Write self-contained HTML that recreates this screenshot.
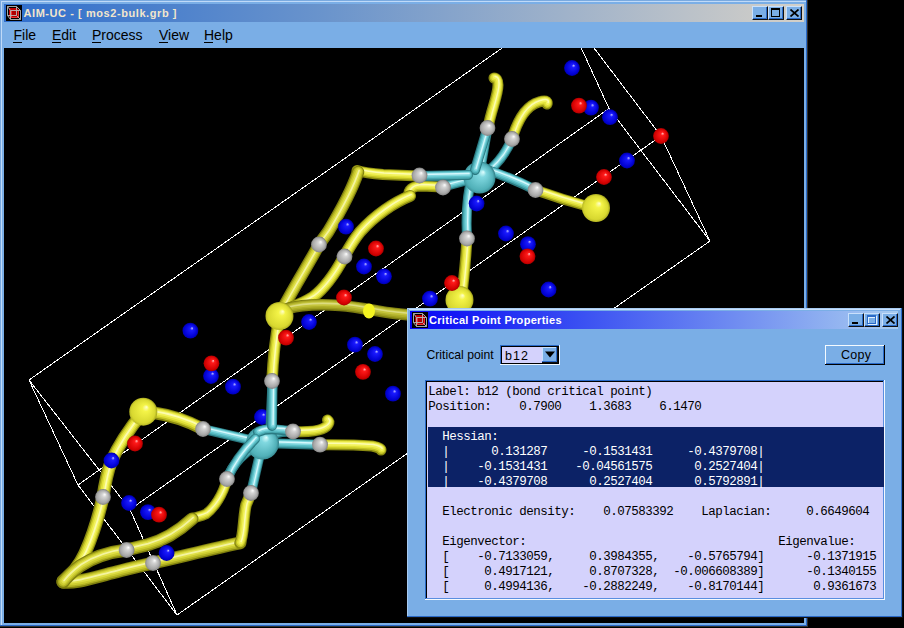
<!DOCTYPE html>
<html><head><meta charset="utf-8">
<style>
*{margin:0;padding:0;box-sizing:border-box}
html,body{width:904px;height:628px;overflow:hidden;background:#000}
body{position:relative;font-family:"Liberation Sans",sans-serif}
.a{position:absolute}
.tx{position:absolute;white-space:pre;line-height:1}
.tb{position:absolute;width:16px;height:14px;background:#7aaee6;border-top:1px solid #c8e0fc;border-left:1px solid #c8e0fc;border-right:1px solid #101010;border-bottom:1px solid #101010;box-shadow:inset -1px -1px 0 #2a6ac8}
pre{position:absolute;font-family:"Liberation Mono",monospace;font-size:12.5px;letter-spacing:-0.5px;line-height:15px;color:#000;white-space:pre}
</style></head><body>
<!-- main window -->
<div class="a" style="left:0;top:0;width:808px;height:627px;background:#303030"></div>
<div class="a" style="left:0;top:0;width:807px;height:626px;background:#2a6ac8"></div>
<div class="a" style="left:0;top:0;width:806px;height:625px;background:#7aaae0"></div>
<div class="a" style="left:1px;top:1px;width:805px;height:624px;background:#c0daf8"></div>
<div class="a" style="left:2px;top:2px;width:804px;height:623px;background:#7aaee6"></div>
<div class="a" style="left:4px;top:4px;width:800px;height:18px;background:linear-gradient(to right,#2f6ecc 0%,#6a94cc 40%,#d4d0c8 100%)"></div>
<svg class="a" style="left:6px;top:5px" width="16" height="16" viewBox="0 0 16 16">
 <rect width="16" height="16" fill="#000"/>
 <path d="M3,3 H11 L13,5 V13 H5 L3,11 Z" fill="#c00000"/>
 <path d="M5,5 H13 V13 H5 Z" fill="#b00000"/>
 <path d="M5.5,5.5 H12.5 V12.5 H5.5 Z" stroke="#ff4040" stroke-width="0.8" fill="none"/>
 <path d="M1.5,1.5 H10.5 V10.5 H1.5 Z M4.5,5.5 H14.5 V14.5 H4.5 Z M1.5,1.5 L4.5,5.5 M10.5,1.5 L14.5,5.5 M10.5,10.5 L14.5,14.5 M1.5,10.5 L4.5,14.5" stroke="#b8b8b8" stroke-width="0.9" fill="none"/>
</svg>
<div class="tx" style="left:23.5px;top:8px;font-size:11px;font-weight:bold;letter-spacing:0.57px;color:#f2e6cc">AIM-UC - [ mos2-bulk.grb ]</div>
<div class="tb" style="left:752px;top:6px"></div>
<div class="tb" style="left:768px;top:6px"></div>
<div class="tb" style="left:786px;top:6px"></div>
<div class="a" style="left:756px;top:15px;width:6px;height:2px;background:#000"></div>
<div class="a" style="left:771px;top:8px;width:9px;height:9px;border:1px solid #000;border-top-width:2px"></div>
<svg class="a" style="left:790px;top:9px" width="9" height="8" viewBox="0 0 9 8"><path d="M0.5,0.5 L8.5,7.5 M8.5,0.5 L0.5,7.5" stroke="#000" stroke-width="1.7"/></svg>
<div class="tx" style="left:13.5px;top:28px;font-size:14px">File</div>
<div class="tx" style="left:52px;top:28px;font-size:14px">Edit</div>
<div class="tx" style="left:92px;top:28px;font-size:14px">Process</div>
<div class="tx" style="left:159px;top:28px;font-size:14px">View</div>
<div class="tx" style="left:204px;top:28px;font-size:14px">Help</div>
<div class="a" style="left:13px;top:42px;width:9px;height:1px;background:#000"></div>
<div class="a" style="left:52px;top:42px;width:9px;height:1px;background:#000"></div>
<div class="a" style="left:92px;top:42px;width:9px;height:1px;background:#000"></div>
<div class="a" style="left:159px;top:42px;width:9px;height:1px;background:#000"></div>
<div class="a" style="left:204px;top:42px;width:9px;height:1px;background:#000"></div>
<!-- canvas -->
<div class="a" style="left:4px;top:48px;width:800px;height:575px;background:#000;overflow:hidden">
<svg width="800" height="575" viewBox="0 0 800 575" style="position:absolute;left:0;top:0">
<defs>
<radialGradient id="gB" cx="0.45" cy="0.55" r="0.6" fx="0.62" fy="0.33"><stop offset="0" stop-color="#c8c8ff"/><stop offset="0.18" stop-color="#1a1aff"/><stop offset="0.7" stop-color="#0000d0"/><stop offset="1" stop-color="#000070"/></radialGradient>
<radialGradient id="gR" cx="0.45" cy="0.55" r="0.6" fx="0.62" fy="0.33"><stop offset="0" stop-color="#ffc8c8"/><stop offset="0.18" stop-color="#ff1a1a"/><stop offset="0.7" stop-color="#d00000"/><stop offset="1" stop-color="#700000"/></radialGradient>
<radialGradient id="gG" cx="0.45" cy="0.55" r="0.6" fx="0.62" fy="0.33"><stop offset="0" stop-color="#ffffff"/><stop offset="0.22" stop-color="#d4d4d4"/><stop offset="0.65" stop-color="#a8a8a8"/><stop offset="1" stop-color="#5c5c5c"/></radialGradient>
<radialGradient id="gY" cx="0.45" cy="0.55" r="0.6" fx="0.62" fy="0.33"><stop offset="0" stop-color="#ffffd0"/><stop offset="0.2" stop-color="#f4f448"/><stop offset="0.7" stop-color="#d8d830"/><stop offset="1" stop-color="#808010"/></radialGradient>
<radialGradient id="gC" cx="0.45" cy="0.55" r="0.6" fx="0.62" fy="0.33"><stop offset="0" stop-color="#e0ffff"/><stop offset="0.2" stop-color="#80d8e0"/><stop offset="0.7" stop-color="#50b0b8"/><stop offset="1" stop-color="#206068"/></radialGradient>
</defs>
<path d="M25.0,332.0L74.0,437.0M74.0,437.0L173.0,567.0M173.0,567.0L126.0,461.5M126.0,461.5L25.0,332.0M25.0,332.0L558.0,-42.0M74.0,437.0L605.0,60.5M173.0,567.0L706.0,193.0M126.0,461.5L657.0,88.0M706.0,193.0L657.0,88.0M706.0,193.0L605.0,60.5M657.0,88.0L558.0,-42.0M605.0,60.5L558.0,-42.0" stroke="#ffffff" stroke-width="1" fill="none" shape-rendering="crispEdges"/>
<path d="M 484.0 80.0 C 487.0 62.0 494.0 48.0 494.0 37.0 C 494.0 32.0 492.0 30.0 490.0 30.0" stroke="#8a8a10" stroke-width="11.0" fill="none" stroke-linecap="round" stroke-linejoin="round"/>
<path d="M 484.0 80.0 C 487.0 62.0 494.0 48.0 494.0 37.0 C 494.0 32.0 492.0 30.0 490.0 30.0" stroke="#c2c224" stroke-width="8.8" fill="none" stroke-linecap="round" stroke-linejoin="round" transform="translate(0.27,-0.36)"/>
<path d="M 484.0 80.0 C 487.0 62.0 494.0 48.0 494.0 37.0 C 494.0 32.0 492.0 30.0 490.0 30.0" stroke="#e2e23a" stroke-width="6.6" fill="none" stroke-linecap="round" stroke-linejoin="round" transform="translate(0.54,-0.72)"/>
<path d="M 484.0 80.0 C 487.0 62.0 494.0 48.0 494.0 37.0 C 494.0 32.0 492.0 30.0 490.0 30.0" stroke="#f2f25c" stroke-width="4.2" fill="none" stroke-linecap="round" stroke-linejoin="round" transform="translate(0.81,-1.08)"/>
<path d="M 484.0 80.0 C 487.0 62.0 494.0 48.0 494.0 37.0 C 494.0 32.0 492.0 30.0 490.0 30.0" stroke="#fcfcb0" stroke-width="1.5" fill="none" stroke-linecap="round" stroke-linejoin="round" transform="translate(1.08,-1.44)"/>
<path d="M 508.0 91.0 C 513.0 74.0 521.0 58.0 535.0 54.0 C 541.0 52.0 544.0 53.0 543.0 56.0" stroke="#8a8a10" stroke-width="11.0" fill="none" stroke-linecap="round" stroke-linejoin="round"/>
<path d="M 508.0 91.0 C 513.0 74.0 521.0 58.0 535.0 54.0 C 541.0 52.0 544.0 53.0 543.0 56.0" stroke="#c2c224" stroke-width="8.8" fill="none" stroke-linecap="round" stroke-linejoin="round" transform="translate(0.27,-0.36)"/>
<path d="M 508.0 91.0 C 513.0 74.0 521.0 58.0 535.0 54.0 C 541.0 52.0 544.0 53.0 543.0 56.0" stroke="#e2e23a" stroke-width="6.6" fill="none" stroke-linecap="round" stroke-linejoin="round" transform="translate(0.54,-0.72)"/>
<path d="M 508.0 91.0 C 513.0 74.0 521.0 58.0 535.0 54.0 C 541.0 52.0 544.0 53.0 543.0 56.0" stroke="#f2f25c" stroke-width="4.2" fill="none" stroke-linecap="round" stroke-linejoin="round" transform="translate(0.81,-1.08)"/>
<path d="M 508.0 91.0 C 513.0 74.0 521.0 58.0 535.0 54.0 C 541.0 52.0 544.0 53.0 543.0 56.0" stroke="#fcfcb0" stroke-width="1.5" fill="none" stroke-linecap="round" stroke-linejoin="round" transform="translate(1.08,-1.44)"/>
<path d="M 415.0 128.0 L 379.0 126.5 C 366.0 125.5 358.0 124.0 353.0 122.5" stroke="#8a8a10" stroke-width="11.0" fill="none" stroke-linecap="round" stroke-linejoin="round"/>
<path d="M 415.0 128.0 L 379.0 126.5 C 366.0 125.5 358.0 124.0 353.0 122.5" stroke="#c2c224" stroke-width="8.8" fill="none" stroke-linecap="round" stroke-linejoin="round" transform="translate(0.27,-0.36)"/>
<path d="M 415.0 128.0 L 379.0 126.5 C 366.0 125.5 358.0 124.0 353.0 122.5" stroke="#e2e23a" stroke-width="6.6" fill="none" stroke-linecap="round" stroke-linejoin="round" transform="translate(0.54,-0.72)"/>
<path d="M 415.0 128.0 L 379.0 126.5 C 366.0 125.5 358.0 124.0 353.0 122.5" stroke="#f2f25c" stroke-width="4.2" fill="none" stroke-linecap="round" stroke-linejoin="round" transform="translate(0.81,-1.08)"/>
<path d="M 415.0 128.0 L 379.0 126.5 C 366.0 125.5 358.0 124.0 353.0 122.5" stroke="#fcfcb0" stroke-width="1.5" fill="none" stroke-linecap="round" stroke-linejoin="round" transform="translate(1.08,-1.44)"/>
<path d="M 354.0 124.0 C 348.0 142.0 336.0 164.0 324.0 184.0 L 315.0 196.5 C 306.0 214.0 291.0 237.0 277.0 264.0" stroke="#80800e" stroke-width="12.5" fill="none" stroke-linecap="round" stroke-linejoin="round"/>
<path d="M 354.0 124.0 C 348.0 142.0 336.0 164.0 324.0 184.0 L 315.0 196.5 C 306.0 214.0 291.0 237.0 277.0 264.0" stroke="#b0b020" stroke-width="10.0" fill="none" stroke-linecap="round" stroke-linejoin="round" transform="translate(0.27,-0.36)"/>
<path d="M 354.0 124.0 C 348.0 142.0 336.0 164.0 324.0 184.0 L 315.0 196.5 C 306.0 214.0 291.0 237.0 277.0 264.0" stroke="#cccc30" stroke-width="7.5" fill="none" stroke-linecap="round" stroke-linejoin="round" transform="translate(0.54,-0.72)"/>
<path d="M 354.0 124.0 C 348.0 142.0 336.0 164.0 324.0 184.0 L 315.0 196.5 C 306.0 214.0 291.0 237.0 277.0 264.0" stroke="#e0e048" stroke-width="4.8" fill="none" stroke-linecap="round" stroke-linejoin="round" transform="translate(0.81,-1.08)"/>
<path d="M 354.0 124.0 C 348.0 142.0 336.0 164.0 324.0 184.0 L 315.0 196.5 C 306.0 214.0 291.0 237.0 277.0 264.0" stroke="#f4f4a0" stroke-width="1.8" fill="none" stroke-linecap="round" stroke-linejoin="round" transform="translate(1.08,-1.44)"/>
<path d="M 438.0 139.0 L 418.0 138.0 C 408.0 138.0 404.0 142.0 405.0 148.0" stroke="#8a8a10" stroke-width="11.0" fill="none" stroke-linecap="round" stroke-linejoin="round"/>
<path d="M 438.0 139.0 L 418.0 138.0 C 408.0 138.0 404.0 142.0 405.0 148.0" stroke="#c2c224" stroke-width="8.8" fill="none" stroke-linecap="round" stroke-linejoin="round" transform="translate(0.27,-0.36)"/>
<path d="M 438.0 139.0 L 418.0 138.0 C 408.0 138.0 404.0 142.0 405.0 148.0" stroke="#e2e23a" stroke-width="6.6" fill="none" stroke-linecap="round" stroke-linejoin="round" transform="translate(0.54,-0.72)"/>
<path d="M 438.0 139.0 L 418.0 138.0 C 408.0 138.0 404.0 142.0 405.0 148.0" stroke="#f2f25c" stroke-width="4.2" fill="none" stroke-linecap="round" stroke-linejoin="round" transform="translate(0.81,-1.08)"/>
<path d="M 438.0 139.0 L 418.0 138.0 C 408.0 138.0 404.0 142.0 405.0 148.0" stroke="#fcfcb0" stroke-width="1.5" fill="none" stroke-linecap="round" stroke-linejoin="round" transform="translate(1.08,-1.44)"/>
<path d="M 406.0 148.0 C 391.0 154.0 371.0 167.0 356.0 184.0 C 348.0 194.0 344.0 202.0 340.5 208.0 C 332.0 224.0 321.0 240.0 309.0 249.0 C 301.0 254.0 294.0 257.0 286.0 260.0" stroke="#8a8a10" stroke-width="12.0" fill="none" stroke-linecap="round" stroke-linejoin="round"/>
<path d="M 406.0 148.0 C 391.0 154.0 371.0 167.0 356.0 184.0 C 348.0 194.0 344.0 202.0 340.5 208.0 C 332.0 224.0 321.0 240.0 309.0 249.0 C 301.0 254.0 294.0 257.0 286.0 260.0" stroke="#c2c224" stroke-width="9.6" fill="none" stroke-linecap="round" stroke-linejoin="round" transform="translate(0.27,-0.36)"/>
<path d="M 406.0 148.0 C 391.0 154.0 371.0 167.0 356.0 184.0 C 348.0 194.0 344.0 202.0 340.5 208.0 C 332.0 224.0 321.0 240.0 309.0 249.0 C 301.0 254.0 294.0 257.0 286.0 260.0" stroke="#e2e23a" stroke-width="7.2" fill="none" stroke-linecap="round" stroke-linejoin="round" transform="translate(0.54,-0.72)"/>
<path d="M 406.0 148.0 C 391.0 154.0 371.0 167.0 356.0 184.0 C 348.0 194.0 344.0 202.0 340.5 208.0 C 332.0 224.0 321.0 240.0 309.0 249.0 C 301.0 254.0 294.0 257.0 286.0 260.0" stroke="#f2f25c" stroke-width="4.6" fill="none" stroke-linecap="round" stroke-linejoin="round" transform="translate(0.81,-1.08)"/>
<path d="M 406.0 148.0 C 391.0 154.0 371.0 167.0 356.0 184.0 C 348.0 194.0 344.0 202.0 340.5 208.0 C 332.0 224.0 321.0 240.0 309.0 249.0 C 301.0 254.0 294.0 257.0 286.0 260.0" stroke="#fcfcb0" stroke-width="1.7" fill="none" stroke-linecap="round" stroke-linejoin="round" transform="translate(1.08,-1.44)"/>
<path d="M 281.0 261.0 C 296.0 257.0 316.0 256.0 336.0 257.5 C 356.0 259.0 376.0 264.0 391.0 265.5 L 416.0 268.0" stroke="#7a7a10" stroke-width="11.5" fill="none" stroke-linecap="round" stroke-linejoin="round"/>
<path d="M 281.0 261.0 C 296.0 257.0 316.0 256.0 336.0 257.5 C 356.0 259.0 376.0 264.0 391.0 265.5 L 416.0 268.0" stroke="#9c9c1c" stroke-width="9.2" fill="none" stroke-linecap="round" stroke-linejoin="round" transform="translate(0.27,-0.36)"/>
<path d="M 281.0 261.0 C 296.0 257.0 316.0 256.0 336.0 257.5 C 356.0 259.0 376.0 264.0 391.0 265.5 L 416.0 268.0" stroke="#b0b02a" stroke-width="6.9" fill="none" stroke-linecap="round" stroke-linejoin="round" transform="translate(0.54,-0.72)"/>
<path d="M 281.0 261.0 C 296.0 257.0 316.0 256.0 336.0 257.5 C 356.0 259.0 376.0 264.0 391.0 265.5 L 416.0 268.0" stroke="#c4c43c" stroke-width="4.4" fill="none" stroke-linecap="round" stroke-linejoin="round" transform="translate(0.81,-1.08)"/>
<path d="M 281.0 261.0 C 296.0 257.0 316.0 256.0 336.0 257.5 C 356.0 259.0 376.0 264.0 391.0 265.5 L 416.0 268.0" stroke="#dcdc80" stroke-width="1.6" fill="none" stroke-linecap="round" stroke-linejoin="round" transform="translate(1.08,-1.44)"/>
<path d="M 268.0 333.0 C 269.0 312.0 271.0 292.0 275.0 270.0" stroke="#8a8a10" stroke-width="11.5" fill="none" stroke-linecap="round" stroke-linejoin="round"/>
<path d="M 268.0 333.0 C 269.0 312.0 271.0 292.0 275.0 270.0" stroke="#c2c224" stroke-width="9.2" fill="none" stroke-linecap="round" stroke-linejoin="round" transform="translate(0.27,-0.36)"/>
<path d="M 268.0 333.0 C 269.0 312.0 271.0 292.0 275.0 270.0" stroke="#e2e23a" stroke-width="6.9" fill="none" stroke-linecap="round" stroke-linejoin="round" transform="translate(0.54,-0.72)"/>
<path d="M 268.0 333.0 C 269.0 312.0 271.0 292.0 275.0 270.0" stroke="#f2f25c" stroke-width="4.4" fill="none" stroke-linecap="round" stroke-linejoin="round" transform="translate(0.81,-1.08)"/>
<path d="M 268.0 333.0 C 269.0 312.0 271.0 292.0 275.0 270.0" stroke="#fcfcb0" stroke-width="1.6" fill="none" stroke-linecap="round" stroke-linejoin="round" transform="translate(1.08,-1.44)"/>
<path d="M 199.0 381.0 C 186.0 374.0 172.0 368.0 146.0 364.0" stroke="#8a8a10" stroke-width="12.5" fill="none" stroke-linecap="round" stroke-linejoin="round"/>
<path d="M 199.0 381.0 C 186.0 374.0 172.0 368.0 146.0 364.0" stroke="#c2c224" stroke-width="10.0" fill="none" stroke-linecap="round" stroke-linejoin="round" transform="translate(0.27,-0.36)"/>
<path d="M 199.0 381.0 C 186.0 374.0 172.0 368.0 146.0 364.0" stroke="#e2e23a" stroke-width="7.5" fill="none" stroke-linecap="round" stroke-linejoin="round" transform="translate(0.54,-0.72)"/>
<path d="M 199.0 381.0 C 186.0 374.0 172.0 368.0 146.0 364.0" stroke="#f2f25c" stroke-width="4.8" fill="none" stroke-linecap="round" stroke-linejoin="round" transform="translate(0.81,-1.08)"/>
<path d="M 199.0 381.0 C 186.0 374.0 172.0 368.0 146.0 364.0" stroke="#fcfcb0" stroke-width="1.8" fill="none" stroke-linecap="round" stroke-linejoin="round" transform="translate(1.08,-1.44)"/>
<path d="M 139.0 364.0 C 126.0 380.0 114.0 398.0 107.0 414.0 C 102.0 428.0 100.0 442.0 99.0 449.0 C 95.0 467.0 89.0 487.0 81.0 505.0 C 75.0 518.0 66.0 528.0 59.0 533.0" stroke="#8a8a10" stroke-width="13.0" fill="none" stroke-linecap="round" stroke-linejoin="round"/>
<path d="M 139.0 364.0 C 126.0 380.0 114.0 398.0 107.0 414.0 C 102.0 428.0 100.0 442.0 99.0 449.0 C 95.0 467.0 89.0 487.0 81.0 505.0 C 75.0 518.0 66.0 528.0 59.0 533.0" stroke="#c2c224" stroke-width="10.4" fill="none" stroke-linecap="round" stroke-linejoin="round" transform="translate(0.27,-0.36)"/>
<path d="M 139.0 364.0 C 126.0 380.0 114.0 398.0 107.0 414.0 C 102.0 428.0 100.0 442.0 99.0 449.0 C 95.0 467.0 89.0 487.0 81.0 505.0 C 75.0 518.0 66.0 528.0 59.0 533.0" stroke="#e2e23a" stroke-width="7.8" fill="none" stroke-linecap="round" stroke-linejoin="round" transform="translate(0.54,-0.72)"/>
<path d="M 139.0 364.0 C 126.0 380.0 114.0 398.0 107.0 414.0 C 102.0 428.0 100.0 442.0 99.0 449.0 C 95.0 467.0 89.0 487.0 81.0 505.0 C 75.0 518.0 66.0 528.0 59.0 533.0" stroke="#f2f25c" stroke-width="4.9" fill="none" stroke-linecap="round" stroke-linejoin="round" transform="translate(0.81,-1.08)"/>
<path d="M 139.0 364.0 C 126.0 380.0 114.0 398.0 107.0 414.0 C 102.0 428.0 100.0 442.0 99.0 449.0 C 95.0 467.0 89.0 487.0 81.0 505.0 C 75.0 518.0 66.0 528.0 59.0 533.0" stroke="#fcfcb0" stroke-width="1.8" fill="none" stroke-linecap="round" stroke-linejoin="round" transform="translate(1.08,-1.44)"/>
<path d="M 59.0 534.0 C 71.0 536.0 91.0 529.0 112.0 524.0 C 126.0 520.0 141.0 517.0 149.0 515.0 C 176.0 509.0 211.0 500.0 236.0 495.0" stroke="#80800e" stroke-width="13.0" fill="none" stroke-linecap="round" stroke-linejoin="round"/>
<path d="M 59.0 534.0 C 71.0 536.0 91.0 529.0 112.0 524.0 C 126.0 520.0 141.0 517.0 149.0 515.0 C 176.0 509.0 211.0 500.0 236.0 495.0" stroke="#b0b020" stroke-width="10.4" fill="none" stroke-linecap="round" stroke-linejoin="round" transform="translate(0.27,-0.36)"/>
<path d="M 59.0 534.0 C 71.0 536.0 91.0 529.0 112.0 524.0 C 126.0 520.0 141.0 517.0 149.0 515.0 C 176.0 509.0 211.0 500.0 236.0 495.0" stroke="#cccc30" stroke-width="7.8" fill="none" stroke-linecap="round" stroke-linejoin="round" transform="translate(0.54,-0.72)"/>
<path d="M 59.0 534.0 C 71.0 536.0 91.0 529.0 112.0 524.0 C 126.0 520.0 141.0 517.0 149.0 515.0 C 176.0 509.0 211.0 500.0 236.0 495.0" stroke="#e0e048" stroke-width="4.9" fill="none" stroke-linecap="round" stroke-linejoin="round" transform="translate(0.81,-1.08)"/>
<path d="M 59.0 534.0 C 71.0 536.0 91.0 529.0 112.0 524.0 C 126.0 520.0 141.0 517.0 149.0 515.0 C 176.0 509.0 211.0 500.0 236.0 495.0" stroke="#f4f4a0" stroke-width="1.8" fill="none" stroke-linecap="round" stroke-linejoin="round" transform="translate(1.08,-1.44)"/>
<path d="M 236.0 495.0 C 240.0 487.0 239.0 470.0 242.0 457.0 L 247.0 445.0" stroke="#8a8a10" stroke-width="11.5" fill="none" stroke-linecap="round" stroke-linejoin="round"/>
<path d="M 236.0 495.0 C 240.0 487.0 239.0 470.0 242.0 457.0 L 247.0 445.0" stroke="#c2c224" stroke-width="9.2" fill="none" stroke-linecap="round" stroke-linejoin="round" transform="translate(0.27,-0.36)"/>
<path d="M 236.0 495.0 C 240.0 487.0 239.0 470.0 242.0 457.0 L 247.0 445.0" stroke="#e2e23a" stroke-width="6.9" fill="none" stroke-linecap="round" stroke-linejoin="round" transform="translate(0.54,-0.72)"/>
<path d="M 236.0 495.0 C 240.0 487.0 239.0 470.0 242.0 457.0 L 247.0 445.0" stroke="#f2f25c" stroke-width="4.4" fill="none" stroke-linecap="round" stroke-linejoin="round" transform="translate(0.81,-1.08)"/>
<path d="M 236.0 495.0 C 240.0 487.0 239.0 470.0 242.0 457.0 L 247.0 445.0" stroke="#fcfcb0" stroke-width="1.6" fill="none" stroke-linecap="round" stroke-linejoin="round" transform="translate(1.08,-1.44)"/>
<path d="M 223.0 431.0 C 219.0 447.0 210.0 460.0 202.0 466.0 C 196.0 469.0 191.0 469.0 188.0 471.0" stroke="#8a8a10" stroke-width="10.5" fill="none" stroke-linecap="round" stroke-linejoin="round"/>
<path d="M 223.0 431.0 C 219.0 447.0 210.0 460.0 202.0 466.0 C 196.0 469.0 191.0 469.0 188.0 471.0" stroke="#c2c224" stroke-width="8.4" fill="none" stroke-linecap="round" stroke-linejoin="round" transform="translate(0.27,-0.36)"/>
<path d="M 223.0 431.0 C 219.0 447.0 210.0 460.0 202.0 466.0 C 196.0 469.0 191.0 469.0 188.0 471.0" stroke="#e2e23a" stroke-width="6.3" fill="none" stroke-linecap="round" stroke-linejoin="round" transform="translate(0.54,-0.72)"/>
<path d="M 223.0 431.0 C 219.0 447.0 210.0 460.0 202.0 466.0 C 196.0 469.0 191.0 469.0 188.0 471.0" stroke="#f2f25c" stroke-width="4.0" fill="none" stroke-linecap="round" stroke-linejoin="round" transform="translate(0.81,-1.08)"/>
<path d="M 223.0 431.0 C 219.0 447.0 210.0 460.0 202.0 466.0 C 196.0 469.0 191.0 469.0 188.0 471.0" stroke="#fcfcb0" stroke-width="1.5" fill="none" stroke-linecap="round" stroke-linejoin="round" transform="translate(1.08,-1.44)"/>
<path d="M 188.0 471.0 C 176.0 482.0 161.0 492.0 143.0 497.0 C 131.0 500.0 126.0 501.0 122.5 502.0 C 106.0 504.0 91.0 508.0 76.0 518.0 C 68.0 524.0 62.0 530.0 59.0 534.0" stroke="#80800e" stroke-width="13.0" fill="none" stroke-linecap="round" stroke-linejoin="round"/>
<path d="M 188.0 471.0 C 176.0 482.0 161.0 492.0 143.0 497.0 C 131.0 500.0 126.0 501.0 122.5 502.0 C 106.0 504.0 91.0 508.0 76.0 518.0 C 68.0 524.0 62.0 530.0 59.0 534.0" stroke="#b0b020" stroke-width="10.4" fill="none" stroke-linecap="round" stroke-linejoin="round" transform="translate(0.27,-0.36)"/>
<path d="M 188.0 471.0 C 176.0 482.0 161.0 492.0 143.0 497.0 C 131.0 500.0 126.0 501.0 122.5 502.0 C 106.0 504.0 91.0 508.0 76.0 518.0 C 68.0 524.0 62.0 530.0 59.0 534.0" stroke="#cccc30" stroke-width="7.8" fill="none" stroke-linecap="round" stroke-linejoin="round" transform="translate(0.54,-0.72)"/>
<path d="M 188.0 471.0 C 176.0 482.0 161.0 492.0 143.0 497.0 C 131.0 500.0 126.0 501.0 122.5 502.0 C 106.0 504.0 91.0 508.0 76.0 518.0 C 68.0 524.0 62.0 530.0 59.0 534.0" stroke="#e0e048" stroke-width="4.9" fill="none" stroke-linecap="round" stroke-linejoin="round" transform="translate(0.81,-1.08)"/>
<path d="M 188.0 471.0 C 176.0 482.0 161.0 492.0 143.0 497.0 C 131.0 500.0 126.0 501.0 122.5 502.0 C 106.0 504.0 91.0 508.0 76.0 518.0 C 68.0 524.0 62.0 530.0 59.0 534.0" stroke="#f4f4a0" stroke-width="1.8" fill="none" stroke-linecap="round" stroke-linejoin="round" transform="translate(1.08,-1.44)"/>
<path d="M 289.0 383.5 C 301.0 384.0 311.0 384.0 318.0 381.0 C 325.0 378.0 326.0 374.0 323.5 372.0" stroke="#8a8a10" stroke-width="11.0" fill="none" stroke-linecap="round" stroke-linejoin="round"/>
<path d="M 289.0 383.5 C 301.0 384.0 311.0 384.0 318.0 381.0 C 325.0 378.0 326.0 374.0 323.5 372.0" stroke="#c2c224" stroke-width="8.8" fill="none" stroke-linecap="round" stroke-linejoin="round" transform="translate(0.27,-0.36)"/>
<path d="M 289.0 383.5 C 301.0 384.0 311.0 384.0 318.0 381.0 C 325.0 378.0 326.0 374.0 323.5 372.0" stroke="#e2e23a" stroke-width="6.6" fill="none" stroke-linecap="round" stroke-linejoin="round" transform="translate(0.54,-0.72)"/>
<path d="M 289.0 383.5 C 301.0 384.0 311.0 384.0 318.0 381.0 C 325.0 378.0 326.0 374.0 323.5 372.0" stroke="#f2f25c" stroke-width="4.2" fill="none" stroke-linecap="round" stroke-linejoin="round" transform="translate(0.81,-1.08)"/>
<path d="M 289.0 383.5 C 301.0 384.0 311.0 384.0 318.0 381.0 C 325.0 378.0 326.0 374.0 323.5 372.0" stroke="#fcfcb0" stroke-width="1.5" fill="none" stroke-linecap="round" stroke-linejoin="round" transform="translate(1.08,-1.44)"/>
<path d="M 316.0 396.7 C 336.0 396.5 356.0 397.0 368.0 398.0 C 374.0 399.0 377.0 401.0 377.0 402.0" stroke="#8a8a10" stroke-width="11.0" fill="none" stroke-linecap="round" stroke-linejoin="round"/>
<path d="M 316.0 396.7 C 336.0 396.5 356.0 397.0 368.0 398.0 C 374.0 399.0 377.0 401.0 377.0 402.0" stroke="#c2c224" stroke-width="8.8" fill="none" stroke-linecap="round" stroke-linejoin="round" transform="translate(0.27,-0.36)"/>
<path d="M 316.0 396.7 C 336.0 396.5 356.0 397.0 368.0 398.0 C 374.0 399.0 377.0 401.0 377.0 402.0" stroke="#e2e23a" stroke-width="6.6" fill="none" stroke-linecap="round" stroke-linejoin="round" transform="translate(0.54,-0.72)"/>
<path d="M 316.0 396.7 C 336.0 396.5 356.0 397.0 368.0 398.0 C 374.0 399.0 377.0 401.0 377.0 402.0" stroke="#f2f25c" stroke-width="4.2" fill="none" stroke-linecap="round" stroke-linejoin="round" transform="translate(0.81,-1.08)"/>
<path d="M 316.0 396.7 C 336.0 396.5 356.0 397.0 368.0 398.0 C 374.0 399.0 377.0 401.0 377.0 402.0" stroke="#fcfcb0" stroke-width="1.5" fill="none" stroke-linecap="round" stroke-linejoin="round" transform="translate(1.08,-1.44)"/>
<path d="M 463.0 190.0 C 462.0 207.0 460.0 232.0 457.0 252.0" stroke="#8a8a10" stroke-width="11.0" fill="none" stroke-linecap="round" stroke-linejoin="round"/>
<path d="M 463.0 190.0 C 462.0 207.0 460.0 232.0 457.0 252.0" stroke="#c2c224" stroke-width="8.8" fill="none" stroke-linecap="round" stroke-linejoin="round" transform="translate(0.27,-0.36)"/>
<path d="M 463.0 190.0 C 462.0 207.0 460.0 232.0 457.0 252.0" stroke="#e2e23a" stroke-width="6.6" fill="none" stroke-linecap="round" stroke-linejoin="round" transform="translate(0.54,-0.72)"/>
<path d="M 463.0 190.0 C 462.0 207.0 460.0 232.0 457.0 252.0" stroke="#f2f25c" stroke-width="4.2" fill="none" stroke-linecap="round" stroke-linejoin="round" transform="translate(0.81,-1.08)"/>
<path d="M 463.0 190.0 C 462.0 207.0 460.0 232.0 457.0 252.0" stroke="#fcfcb0" stroke-width="1.5" fill="none" stroke-linecap="round" stroke-linejoin="round" transform="translate(1.08,-1.44)"/>
<path d="M 531.5 142.0 C 551.0 149.0 571.0 155.0 586.0 159.0" stroke="#8a8a10" stroke-width="10.5" fill="none" stroke-linecap="round" stroke-linejoin="round"/>
<path d="M 531.5 142.0 C 551.0 149.0 571.0 155.0 586.0 159.0" stroke="#c2c224" stroke-width="8.4" fill="none" stroke-linecap="round" stroke-linejoin="round" transform="translate(0.27,-0.36)"/>
<path d="M 531.5 142.0 C 551.0 149.0 571.0 155.0 586.0 159.0" stroke="#e2e23a" stroke-width="6.3" fill="none" stroke-linecap="round" stroke-linejoin="round" transform="translate(0.54,-0.72)"/>
<path d="M 531.5 142.0 C 551.0 149.0 571.0 155.0 586.0 159.0" stroke="#f2f25c" stroke-width="4.0" fill="none" stroke-linecap="round" stroke-linejoin="round" transform="translate(0.81,-1.08)"/>
<path d="M 531.5 142.0 C 551.0 149.0 571.0 155.0 586.0 159.0" stroke="#fcfcb0" stroke-width="1.5" fill="none" stroke-linecap="round" stroke-linejoin="round" transform="translate(1.08,-1.44)"/>
<circle cx="258.0" cy="369.0" r="7.9" fill="url(#gB)"/>
<path d="M 475.0 129.0 L 483.5 80.0" stroke="#2a7a82" stroke-width="10.0" fill="none" stroke-linecap="round" stroke-linejoin="round"/>
<path d="M 475.0 129.0 L 483.5 80.0" stroke="#48a8b0" stroke-width="8.0" fill="none" stroke-linecap="round" stroke-linejoin="round" transform="translate(0.27,-0.36)"/>
<path d="M 475.0 129.0 L 483.5 80.0" stroke="#5ec2ca" stroke-width="6.0" fill="none" stroke-linecap="round" stroke-linejoin="round" transform="translate(0.54,-0.72)"/>
<path d="M 475.0 129.0 L 483.5 80.0" stroke="#86dae2" stroke-width="3.8" fill="none" stroke-linecap="round" stroke-linejoin="round" transform="translate(0.81,-1.08)"/>
<path d="M 475.0 129.0 L 483.5 80.0" stroke="#d4f8fc" stroke-width="1.4" fill="none" stroke-linecap="round" stroke-linejoin="round" transform="translate(1.08,-1.44)"/>
<path d="M 476.0 129.0 C 491.0 120.0 501.0 107.0 508.0 91.0" stroke="#2a7a82" stroke-width="10.0" fill="none" stroke-linecap="round" stroke-linejoin="round"/>
<path d="M 476.0 129.0 C 491.0 120.0 501.0 107.0 508.0 91.0" stroke="#48a8b0" stroke-width="8.0" fill="none" stroke-linecap="round" stroke-linejoin="round" transform="translate(0.27,-0.36)"/>
<path d="M 476.0 129.0 C 491.0 120.0 501.0 107.0 508.0 91.0" stroke="#5ec2ca" stroke-width="6.0" fill="none" stroke-linecap="round" stroke-linejoin="round" transform="translate(0.54,-0.72)"/>
<path d="M 476.0 129.0 C 491.0 120.0 501.0 107.0 508.0 91.0" stroke="#86dae2" stroke-width="3.8" fill="none" stroke-linecap="round" stroke-linejoin="round" transform="translate(0.81,-1.08)"/>
<path d="M 476.0 129.0 C 491.0 120.0 501.0 107.0 508.0 91.0" stroke="#d4f8fc" stroke-width="1.4" fill="none" stroke-linecap="round" stroke-linejoin="round" transform="translate(1.08,-1.44)"/>
<path d="M 475.0 129.0 L 415.0 128.0" stroke="#2a7a82" stroke-width="10.0" fill="none" stroke-linecap="round" stroke-linejoin="round"/>
<path d="M 475.0 129.0 L 415.0 128.0" stroke="#48a8b0" stroke-width="8.0" fill="none" stroke-linecap="round" stroke-linejoin="round" transform="translate(0.27,-0.36)"/>
<path d="M 475.0 129.0 L 415.0 128.0" stroke="#5ec2ca" stroke-width="6.0" fill="none" stroke-linecap="round" stroke-linejoin="round" transform="translate(0.54,-0.72)"/>
<path d="M 475.0 129.0 L 415.0 128.0" stroke="#86dae2" stroke-width="3.8" fill="none" stroke-linecap="round" stroke-linejoin="round" transform="translate(0.81,-1.08)"/>
<path d="M 475.0 129.0 L 415.0 128.0" stroke="#d4f8fc" stroke-width="1.4" fill="none" stroke-linecap="round" stroke-linejoin="round" transform="translate(1.08,-1.44)"/>
<path d="M 475.0 129.0 L 438.0 139.0" stroke="#2a7a82" stroke-width="10.0" fill="none" stroke-linecap="round" stroke-linejoin="round"/>
<path d="M 475.0 129.0 L 438.0 139.0" stroke="#48a8b0" stroke-width="8.0" fill="none" stroke-linecap="round" stroke-linejoin="round" transform="translate(0.27,-0.36)"/>
<path d="M 475.0 129.0 L 438.0 139.0" stroke="#5ec2ca" stroke-width="6.0" fill="none" stroke-linecap="round" stroke-linejoin="round" transform="translate(0.54,-0.72)"/>
<path d="M 475.0 129.0 L 438.0 139.0" stroke="#86dae2" stroke-width="3.8" fill="none" stroke-linecap="round" stroke-linejoin="round" transform="translate(0.81,-1.08)"/>
<path d="M 475.0 129.0 L 438.0 139.0" stroke="#d4f8fc" stroke-width="1.4" fill="none" stroke-linecap="round" stroke-linejoin="round" transform="translate(1.08,-1.44)"/>
<path d="M 480.0 121.0 C 496.0 126.0 516.0 134.0 531.5 142.0" stroke="#2a7a82" stroke-width="10.0" fill="none" stroke-linecap="round" stroke-linejoin="round"/>
<path d="M 480.0 121.0 C 496.0 126.0 516.0 134.0 531.5 142.0" stroke="#48a8b0" stroke-width="8.0" fill="none" stroke-linecap="round" stroke-linejoin="round" transform="translate(0.27,-0.36)"/>
<path d="M 480.0 121.0 C 496.0 126.0 516.0 134.0 531.5 142.0" stroke="#5ec2ca" stroke-width="6.0" fill="none" stroke-linecap="round" stroke-linejoin="round" transform="translate(0.54,-0.72)"/>
<path d="M 480.0 121.0 C 496.0 126.0 516.0 134.0 531.5 142.0" stroke="#86dae2" stroke-width="3.8" fill="none" stroke-linecap="round" stroke-linejoin="round" transform="translate(0.81,-1.08)"/>
<path d="M 480.0 121.0 C 496.0 126.0 516.0 134.0 531.5 142.0" stroke="#d4f8fc" stroke-width="1.4" fill="none" stroke-linecap="round" stroke-linejoin="round" transform="translate(1.08,-1.44)"/>
<path d="M 466.0 137.0 C 463.0 152.0 462.0 172.0 463.0 190.0" stroke="#2a7a82" stroke-width="10.0" fill="none" stroke-linecap="round" stroke-linejoin="round"/>
<path d="M 466.0 137.0 C 463.0 152.0 462.0 172.0 463.0 190.0" stroke="#48a8b0" stroke-width="8.0" fill="none" stroke-linecap="round" stroke-linejoin="round" transform="translate(0.27,-0.36)"/>
<path d="M 466.0 137.0 C 463.0 152.0 462.0 172.0 463.0 190.0" stroke="#5ec2ca" stroke-width="6.0" fill="none" stroke-linecap="round" stroke-linejoin="round" transform="translate(0.54,-0.72)"/>
<path d="M 466.0 137.0 C 463.0 152.0 462.0 172.0 463.0 190.0" stroke="#86dae2" stroke-width="3.8" fill="none" stroke-linecap="round" stroke-linejoin="round" transform="translate(0.81,-1.08)"/>
<path d="M 466.0 137.0 C 463.0 152.0 462.0 172.0 463.0 190.0" stroke="#d4f8fc" stroke-width="1.4" fill="none" stroke-linecap="round" stroke-linejoin="round" transform="translate(1.08,-1.44)"/>
<path d="M 266.0 392.0 L 268.5 333.0" stroke="#2a7a82" stroke-width="10.0" fill="none" stroke-linecap="round" stroke-linejoin="round"/>
<path d="M 266.0 392.0 L 268.5 333.0" stroke="#48a8b0" stroke-width="8.0" fill="none" stroke-linecap="round" stroke-linejoin="round" transform="translate(0.27,-0.36)"/>
<path d="M 266.0 392.0 L 268.5 333.0" stroke="#5ec2ca" stroke-width="6.0" fill="none" stroke-linecap="round" stroke-linejoin="round" transform="translate(0.54,-0.72)"/>
<path d="M 266.0 392.0 L 268.5 333.0" stroke="#86dae2" stroke-width="3.8" fill="none" stroke-linecap="round" stroke-linejoin="round" transform="translate(0.81,-1.08)"/>
<path d="M 266.0 392.0 L 268.5 333.0" stroke="#d4f8fc" stroke-width="1.4" fill="none" stroke-linecap="round" stroke-linejoin="round" transform="translate(1.08,-1.44)"/>
<path d="M 258.5 395.0 L 199.0 381.0" stroke="#2a7a82" stroke-width="10.0" fill="none" stroke-linecap="round" stroke-linejoin="round"/>
<path d="M 258.5 395.0 L 199.0 381.0" stroke="#48a8b0" stroke-width="8.0" fill="none" stroke-linecap="round" stroke-linejoin="round" transform="translate(0.27,-0.36)"/>
<path d="M 258.5 395.0 L 199.0 381.0" stroke="#5ec2ca" stroke-width="6.0" fill="none" stroke-linecap="round" stroke-linejoin="round" transform="translate(0.54,-0.72)"/>
<path d="M 258.5 395.0 L 199.0 381.0" stroke="#86dae2" stroke-width="3.8" fill="none" stroke-linecap="round" stroke-linejoin="round" transform="translate(0.81,-1.08)"/>
<path d="M 258.5 395.0 L 199.0 381.0" stroke="#d4f8fc" stroke-width="1.4" fill="none" stroke-linecap="round" stroke-linejoin="round" transform="translate(1.08,-1.44)"/>
<path d="M 258.5 395.0 C 261.0 387.0 276.0 383.0 289.0 383.5" stroke="#2a7a82" stroke-width="10.0" fill="none" stroke-linecap="round" stroke-linejoin="round"/>
<path d="M 258.5 395.0 C 261.0 387.0 276.0 383.0 289.0 383.5" stroke="#48a8b0" stroke-width="8.0" fill="none" stroke-linecap="round" stroke-linejoin="round" transform="translate(0.27,-0.36)"/>
<path d="M 258.5 395.0 C 261.0 387.0 276.0 383.0 289.0 383.5" stroke="#5ec2ca" stroke-width="6.0" fill="none" stroke-linecap="round" stroke-linejoin="round" transform="translate(0.54,-0.72)"/>
<path d="M 258.5 395.0 C 261.0 387.0 276.0 383.0 289.0 383.5" stroke="#86dae2" stroke-width="3.8" fill="none" stroke-linecap="round" stroke-linejoin="round" transform="translate(0.81,-1.08)"/>
<path d="M 258.5 395.0 C 261.0 387.0 276.0 383.0 289.0 383.5" stroke="#d4f8fc" stroke-width="1.4" fill="none" stroke-linecap="round" stroke-linejoin="round" transform="translate(1.08,-1.44)"/>
<path d="M 258.5 395.0 L 316.0 396.7" stroke="#2a7a82" stroke-width="10.0" fill="none" stroke-linecap="round" stroke-linejoin="round"/>
<path d="M 258.5 395.0 L 316.0 396.7" stroke="#48a8b0" stroke-width="8.0" fill="none" stroke-linecap="round" stroke-linejoin="round" transform="translate(0.27,-0.36)"/>
<path d="M 258.5 395.0 L 316.0 396.7" stroke="#5ec2ca" stroke-width="6.0" fill="none" stroke-linecap="round" stroke-linejoin="round" transform="translate(0.54,-0.72)"/>
<path d="M 258.5 395.0 L 316.0 396.7" stroke="#86dae2" stroke-width="3.8" fill="none" stroke-linecap="round" stroke-linejoin="round" transform="translate(0.81,-1.08)"/>
<path d="M 258.5 395.0 L 316.0 396.7" stroke="#d4f8fc" stroke-width="1.4" fill="none" stroke-linecap="round" stroke-linejoin="round" transform="translate(1.08,-1.44)"/>
<path d="M 258.5 395.0 C 241.0 402.0 228.0 417.0 223.0 431.0" stroke="#2a7a82" stroke-width="10.0" fill="none" stroke-linecap="round" stroke-linejoin="round"/>
<path d="M 258.5 395.0 C 241.0 402.0 228.0 417.0 223.0 431.0" stroke="#48a8b0" stroke-width="8.0" fill="none" stroke-linecap="round" stroke-linejoin="round" transform="translate(0.27,-0.36)"/>
<path d="M 258.5 395.0 C 241.0 402.0 228.0 417.0 223.0 431.0" stroke="#5ec2ca" stroke-width="6.0" fill="none" stroke-linecap="round" stroke-linejoin="round" transform="translate(0.54,-0.72)"/>
<path d="M 258.5 395.0 C 241.0 402.0 228.0 417.0 223.0 431.0" stroke="#86dae2" stroke-width="3.8" fill="none" stroke-linecap="round" stroke-linejoin="round" transform="translate(0.81,-1.08)"/>
<path d="M 258.5 395.0 C 241.0 402.0 228.0 417.0 223.0 431.0" stroke="#d4f8fc" stroke-width="1.4" fill="none" stroke-linecap="round" stroke-linejoin="round" transform="translate(1.08,-1.44)"/>
<path d="M 258.5 395.0 L 247.0 445.0" stroke="#2a7a82" stroke-width="10.0" fill="none" stroke-linecap="round" stroke-linejoin="round"/>
<path d="M 258.5 395.0 L 247.0 445.0" stroke="#48a8b0" stroke-width="8.0" fill="none" stroke-linecap="round" stroke-linejoin="round" transform="translate(0.27,-0.36)"/>
<path d="M 258.5 395.0 L 247.0 445.0" stroke="#5ec2ca" stroke-width="6.0" fill="none" stroke-linecap="round" stroke-linejoin="round" transform="translate(0.54,-0.72)"/>
<path d="M 258.5 395.0 L 247.0 445.0" stroke="#86dae2" stroke-width="3.8" fill="none" stroke-linecap="round" stroke-linejoin="round" transform="translate(0.81,-1.08)"/>
<path d="M 258.5 395.0 L 247.0 445.0" stroke="#d4f8fc" stroke-width="1.4" fill="none" stroke-linecap="round" stroke-linejoin="round" transform="translate(1.08,-1.44)"/>
<circle cx="475.5" cy="129.4" r="16" fill="url(#gC)"/>
<circle cx="258.5" cy="395.0" r="16.5" fill="url(#gC)"/>
<path d="M 471.0 122.0 L 483.5 80.0" stroke="#2a7a82" stroke-width="10.0" fill="none" stroke-linecap="round" stroke-linejoin="round"/>
<path d="M 471.0 122.0 L 483.5 80.0" stroke="#48a8b0" stroke-width="8.0" fill="none" stroke-linecap="round" stroke-linejoin="round" transform="translate(0.27,-0.36)"/>
<path d="M 471.0 122.0 L 483.5 80.0" stroke="#5ec2ca" stroke-width="6.0" fill="none" stroke-linecap="round" stroke-linejoin="round" transform="translate(0.54,-0.72)"/>
<path d="M 471.0 122.0 L 483.5 80.0" stroke="#86dae2" stroke-width="3.8" fill="none" stroke-linecap="round" stroke-linejoin="round" transform="translate(0.81,-1.08)"/>
<path d="M 471.0 122.0 L 483.5 80.0" stroke="#d4f8fc" stroke-width="1.4" fill="none" stroke-linecap="round" stroke-linejoin="round" transform="translate(1.08,-1.44)"/>
<path d="M 464.0 127.0 L 415.0 128.0" stroke="#2a7a82" stroke-width="10.0" fill="none" stroke-linecap="round" stroke-linejoin="round"/>
<path d="M 464.0 127.0 L 415.0 128.0" stroke="#48a8b0" stroke-width="8.0" fill="none" stroke-linecap="round" stroke-linejoin="round" transform="translate(0.27,-0.36)"/>
<path d="M 464.0 127.0 L 415.0 128.0" stroke="#5ec2ca" stroke-width="6.0" fill="none" stroke-linecap="round" stroke-linejoin="round" transform="translate(0.54,-0.72)"/>
<path d="M 464.0 127.0 L 415.0 128.0" stroke="#86dae2" stroke-width="3.8" fill="none" stroke-linecap="round" stroke-linejoin="round" transform="translate(0.81,-1.08)"/>
<path d="M 464.0 127.0 L 415.0 128.0" stroke="#d4f8fc" stroke-width="1.4" fill="none" stroke-linecap="round" stroke-linejoin="round" transform="translate(1.08,-1.44)"/>
<path d="M 254.0 384.0 C 264.0 379.0 277.0 382.0 289.0 383.5" stroke="#2a7a82" stroke-width="10.0" fill="none" stroke-linecap="round" stroke-linejoin="round"/>
<path d="M 254.0 384.0 C 264.0 379.0 277.0 382.0 289.0 383.5" stroke="#48a8b0" stroke-width="8.0" fill="none" stroke-linecap="round" stroke-linejoin="round" transform="translate(0.27,-0.36)"/>
<path d="M 254.0 384.0 C 264.0 379.0 277.0 382.0 289.0 383.5" stroke="#5ec2ca" stroke-width="6.0" fill="none" stroke-linecap="round" stroke-linejoin="round" transform="translate(0.54,-0.72)"/>
<path d="M 254.0 384.0 C 264.0 379.0 277.0 382.0 289.0 383.5" stroke="#86dae2" stroke-width="3.8" fill="none" stroke-linecap="round" stroke-linejoin="round" transform="translate(0.81,-1.08)"/>
<path d="M 254.0 384.0 C 264.0 379.0 277.0 382.0 289.0 383.5" stroke="#d4f8fc" stroke-width="1.4" fill="none" stroke-linecap="round" stroke-linejoin="round" transform="translate(1.08,-1.44)"/>
<path d="M 251.0 391.0 C 241.0 401.0 230.0 415.0 223.0 431.0" stroke="#2a7a82" stroke-width="10.0" fill="none" stroke-linecap="round" stroke-linejoin="round"/>
<path d="M 251.0 391.0 C 241.0 401.0 230.0 415.0 223.0 431.0" stroke="#48a8b0" stroke-width="8.0" fill="none" stroke-linecap="round" stroke-linejoin="round" transform="translate(0.27,-0.36)"/>
<path d="M 251.0 391.0 C 241.0 401.0 230.0 415.0 223.0 431.0" stroke="#5ec2ca" stroke-width="6.0" fill="none" stroke-linecap="round" stroke-linejoin="round" transform="translate(0.54,-0.72)"/>
<path d="M 251.0 391.0 C 241.0 401.0 230.0 415.0 223.0 431.0" stroke="#86dae2" stroke-width="3.8" fill="none" stroke-linecap="round" stroke-linejoin="round" transform="translate(0.81,-1.08)"/>
<path d="M 251.0 391.0 C 241.0 401.0 230.0 415.0 223.0 431.0" stroke="#d4f8fc" stroke-width="1.4" fill="none" stroke-linecap="round" stroke-linejoin="round" transform="translate(1.08,-1.44)"/>
<path d="M 268.0 378.0 L 268.5 333.0" stroke="#2a7a82" stroke-width="10.0" fill="none" stroke-linecap="round" stroke-linejoin="round"/>
<path d="M 268.0 378.0 L 268.5 333.0" stroke="#48a8b0" stroke-width="8.0" fill="none" stroke-linecap="round" stroke-linejoin="round" transform="translate(0.27,-0.36)"/>
<path d="M 268.0 378.0 L 268.5 333.0" stroke="#5ec2ca" stroke-width="6.0" fill="none" stroke-linecap="round" stroke-linejoin="round" transform="translate(0.54,-0.72)"/>
<path d="M 268.0 378.0 L 268.5 333.0" stroke="#86dae2" stroke-width="3.8" fill="none" stroke-linecap="round" stroke-linejoin="round" transform="translate(0.81,-1.08)"/>
<path d="M 268.0 378.0 L 268.5 333.0" stroke="#d4f8fc" stroke-width="1.4" fill="none" stroke-linecap="round" stroke-linejoin="round" transform="translate(1.08,-1.44)"/>
<circle cx="592.0" cy="160.0" r="14" fill="url(#gY)"/>
<circle cx="455.5" cy="252.0" r="14" fill="url(#gY)"/>
<circle cx="275.5" cy="268.0" r="14" fill="url(#gY)"/>
<circle cx="139.3" cy="363.7" r="14" fill="url(#gY)"/>
<ellipse cx="365.0" cy="263.0" rx="6" ry="7.5" fill="#f4f420"/>
<circle cx="483.5" cy="80.0" r="7.9" fill="url(#gG)"/>
<circle cx="508.0" cy="91.0" r="7.9" fill="url(#gG)"/>
<circle cx="415.5" cy="127.5" r="7.9" fill="url(#gG)"/>
<circle cx="439.0" cy="139.5" r="7.9" fill="url(#gG)"/>
<circle cx="531.5" cy="142.0" r="7.9" fill="url(#gG)"/>
<circle cx="463.0" cy="190.5" r="7.9" fill="url(#gG)"/>
<circle cx="315.0" cy="196.5" r="7.9" fill="url(#gG)"/>
<circle cx="340.5" cy="208.5" r="7.9" fill="url(#gG)"/>
<circle cx="268.0" cy="333.0" r="7.9" fill="url(#gG)"/>
<circle cx="199.0" cy="381.0" r="7.9" fill="url(#gG)"/>
<circle cx="289.0" cy="383.5" r="7.9" fill="url(#gG)"/>
<circle cx="316.0" cy="396.7" r="7.9" fill="url(#gG)"/>
<circle cx="223.0" cy="431.0" r="7.9" fill="url(#gG)"/>
<circle cx="247.0" cy="445.0" r="7.9" fill="url(#gG)"/>
<circle cx="99.0" cy="449.0" r="7.9" fill="url(#gG)"/>
<circle cx="122.6" cy="502.0" r="7.9" fill="url(#gG)"/>
<circle cx="149.0" cy="515.0" r="7.9" fill="url(#gG)"/>
<circle cx="568.0" cy="20.0" r="7.9" fill="url(#gB)"/>
<circle cx="587.0" cy="59.6" r="7.9" fill="url(#gB)"/>
<circle cx="606.0" cy="69.2" r="7.9" fill="url(#gB)"/>
<circle cx="623.0" cy="112.5" r="7.9" fill="url(#gB)"/>
<circle cx="472.6" cy="155.5" r="7.9" fill="url(#gB)"/>
<circle cx="342.0" cy="178.7" r="7.9" fill="url(#gB)"/>
<circle cx="360.0" cy="218.5" r="7.9" fill="url(#gB)"/>
<circle cx="380.0" cy="228.3" r="7.9" fill="url(#gB)"/>
<circle cx="426.0" cy="250.6" r="7.9" fill="url(#gB)"/>
<circle cx="502.0" cy="185.5" r="7.9" fill="url(#gB)"/>
<circle cx="524.0" cy="196.2" r="7.9" fill="url(#gB)"/>
<circle cx="544.6" cy="241.5" r="7.9" fill="url(#gB)"/>
<circle cx="305.0" cy="274.0" r="7.9" fill="url(#gB)"/>
<circle cx="351.0" cy="296.7" r="7.9" fill="url(#gB)"/>
<circle cx="371.0" cy="306.0" r="7.9" fill="url(#gB)"/>
<circle cx="389.0" cy="345.7" r="7.9" fill="url(#gB)"/>
<circle cx="186.4" cy="282.7" r="7.9" fill="url(#gB)"/>
<circle cx="207.0" cy="328.0" r="7.9" fill="url(#gB)"/>
<circle cx="229.0" cy="338.7" r="7.9" fill="url(#gB)"/>
<circle cx="107.5" cy="412.5" r="7.9" fill="url(#gB)"/>
<circle cx="125.0" cy="455.0" r="7.9" fill="url(#gB)"/>
<circle cx="144.0" cy="464.2" r="7.9" fill="url(#gB)"/>
<circle cx="162.6" cy="505.0" r="7.9" fill="url(#gB)"/>
<circle cx="575.0" cy="57.6" r="7.9" fill="url(#gR)"/>
<circle cx="657.0" cy="88.0" r="7.9" fill="url(#gR)"/>
<circle cx="600.0" cy="129.0" r="7.9" fill="url(#gR)"/>
<circle cx="372.0" cy="200.5" r="7.9" fill="url(#gR)"/>
<circle cx="523.5" cy="208.4" r="7.9" fill="url(#gR)"/>
<circle cx="340.0" cy="249.5" r="7.9" fill="url(#gR)"/>
<circle cx="448.0" cy="235.0" r="7.9" fill="url(#gR)"/>
<circle cx="282.0" cy="289.7" r="7.9" fill="url(#gR)"/>
<circle cx="207.5" cy="315.3" r="7.9" fill="url(#gR)"/>
<circle cx="131.0" cy="395.5" r="7.9" fill="url(#gR)"/>
<circle cx="155.0" cy="466.7" r="7.9" fill="url(#gR)"/>
<circle cx="359.0" cy="323.8" r="7.9" fill="url(#gR)"/>
</svg>
</div>
<!-- dialog -->
<div class="a" style="left:407px;top:308px;width:496px;height:310px;background:#101010"></div>
<div class="a" style="left:407px;top:308px;width:495px;height:309px;background:#2a6ac8"></div>
<div class="a" style="left:407px;top:308px;width:494px;height:308px;background:#a6caf0"></div>
<div class="a" style="left:408px;top:309px;width:493px;height:307px;background:#7aaee6"></div>
<div class="a" style="left:409px;top:309px;width:491px;height:1px;background:#c8e0fc"></div>
<div class="a" style="left:410px;top:311px;width:488px;height:18px;background:linear-gradient(to right,#0606f6 0%,#3a50f2 35%,#a8ccf0 100%)"></div>
<svg class="a" style="left:412px;top:312px" width="16" height="16" viewBox="0 0 16 16">
 <rect width="16" height="16" fill="#000"/>
 <path d="M3,3 H11 L13,5 V13 H5 L3,11 Z" fill="#c00000"/>
 <path d="M5,5 H13 V13 H5 Z" fill="#b00000"/>
 <path d="M5.5,5.5 H12.5 V12.5 H5.5 Z" stroke="#ff4040" stroke-width="0.8" fill="none"/>
 <path d="M1.5,1.5 H10.5 V10.5 H1.5 Z M4.5,5.5 H14.5 V14.5 H4.5 Z M1.5,1.5 L4.5,5.5 M10.5,1.5 L14.5,5.5 M10.5,10.5 L14.5,14.5 M1.5,10.5 L4.5,14.5" stroke="#b8b8b8" stroke-width="0.9" fill="none"/>
</svg>
<div class="tx" style="left:429px;top:314.5px;font-size:11px;font-weight:bold;letter-spacing:0.3px;color:#fff">Critical Point Properties</div>
<div class="tb" style="left:848px;top:313px"></div>
<div class="tb" style="left:864px;top:313px"></div>
<div class="tb" style="left:882px;top:313px"></div>
<div class="a" style="left:852px;top:322px;width:6px;height:2px;background:#000"></div>
<div class="a" style="left:868px;top:316px;width:9px;height:9px;border:1px solid #e0f0ff;border-top-width:2px"></div>
<div class="a" style="left:867px;top:315px;width:9px;height:9px;border:1px solid #2a6ac8;border-top-width:2px"></div>
<svg class="a" style="left:886px;top:316px" width="9" height="8" viewBox="0 0 9 8"><path d="M0.5,0.5 L8.5,7.5 M8.5,0.5 L0.5,7.5" stroke="#000" stroke-width="1.7"/></svg>
<div class="tx" style="left:426.5px;top:349px;font-size:12.2px">Critical point</div>
<!-- combo -->
<div class="a" style="left:500px;top:345px;width:60px;height:20px;background:#f0f8ff"></div>
<div class="a" style="left:500px;top:345px;width:59px;height:19px;background:#2a6ac8"></div>
<div class="a" style="left:501px;top:346px;width:58px;height:18px;background:#000"></div>
<div class="a" style="left:502px;top:347px;width:56px;height:16px;background:#d4d2fc"></div>
<div class="a" style="left:542px;top:347px;width:16px;height:16px;background:#101010"></div>
<div class="a" style="left:542px;top:347px;width:15px;height:15px;background:#2a6ac8"></div>
<div class="a" style="left:542px;top:347px;width:14px;height:14px;background:#c8e0fc"></div>
<div class="a" style="left:543px;top:348px;width:13px;height:13px;background:#7aaee6"></div>
<svg class="a" style="left:544px;top:351px" width="12" height="7" viewBox="0 0 12 7"><path d="M1,0.5 H11 L6,6.5 Z" fill="#000"/></svg>
<div class="tx" style="left:505px;top:349.5px;font-size:12.5px;letter-spacing:1.1px">b12</div>
<!-- copy button -->
<div class="a" style="left:825px;top:345px;width:60px;height:20px;background:#000"></div>
<div class="a" style="left:825px;top:345px;width:59px;height:19px;background:#f4faff"></div>
<div class="a" style="left:826px;top:346px;width:58px;height:18px;background:#2a6ac8"></div>
<div class="a" style="left:826px;top:346px;width:57px;height:17px;background:#7aaee6"></div>
<div class="tx" style="left:841px;top:348.5px;font-size:12.5px;letter-spacing:0.3px">Copy</div>
<!-- text area -->
<div class="a" style="left:425px;top:380px;width:460px;height:220px;background:#f4faff"></div>
<div class="a" style="left:425px;top:380px;width:459px;height:219px;background:#2a6ac8"></div>
<div class="a" style="left:426px;top:381px;width:458px;height:218px;background:#5a8ee0"></div>
<div class="a" style="left:426px;top:381px;width:457px;height:217px;background:#000"></div>
<div class="a" style="left:427px;top:382px;width:456px;height:216px;background:#d4d2fc"></div>
<div class="a" style="left:428px;top:427px;width:456px;height:60px;background:#0c2266"></div>
<pre style="left:428.3px;top:384.5px">Label: b12 (bond critical point)
Position:    0.7900    1.3683    6.1470
</pre>
<pre style="left:428.3px;top:429.5px;color:#fff">  Hessian:
  |      0.131287     -0.1531431     -0.4379708|
  |    -0.1531431    -0.04561575      0.2527404|
  |    -0.4379708      0.2527404      0.5792891|</pre>
<pre style="left:428.3px;top:504.5px">  Electronic density:    0.07583392    Laplacian:     0.6649604

  Eigenvector:                                    Eigenvalue:
  [    -0.7133059,     0.3984355,    -0.5765794]      -0.1371915
  [     0.4917121,     0.8707328,  -0.006608389]      -0.1340155
  [     0.4994136,    -0.2882249,    -0.8170144]       0.9361673</pre>
</body></html>
